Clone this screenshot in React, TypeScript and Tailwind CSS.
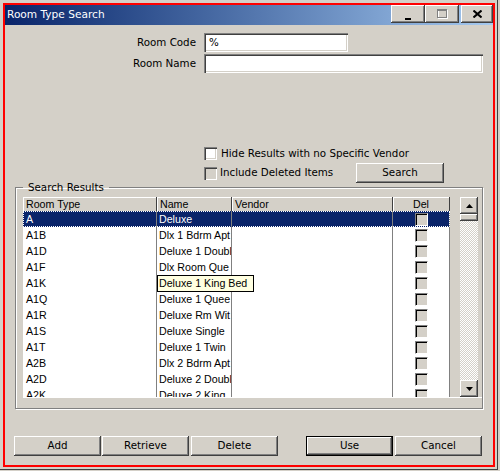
import React from "react";

const raised =
  "bg-[#d4d0c8] shadow-[inset_-1px_-1px_0_#404040,inset_1px_1px_0_#ffffff,inset_-2px_-2px_0_#808080]";
const sunken =
  "shadow-[inset_1px_1px_0_#808080,inset_2px_2px_0_#404040,inset_-1px_-1px_0_#ffffff,inset_-2px_-2px_0_#d4d0c8]";

const rows: [string, string][] = [
  ["A", "Deluxe"],
  ["A1B", "Dlx 1 Bdrm Apt"],
  ["A1D", "Deluxe 1 Doubl"],
  ["A1F", "Dlx Room Que"],
  ["A1K", "Deluxe 1 King Bed"],
  ["A1Q", "Deluxe 1 Quee"],
  ["A1R", "Deluxe Rm Wit"],
  ["A1S", "Deluxe Single"],
  ["A1T", "Deluxe 1 Twin"],
  ["A2B", "Dlx 2 Bdrm Apt"],
  ["A2D", "Deluxe 2 Doubl"],
  ["A2K", "Deluxe 2 King"],
];

function WinButton({ label, isDefault }: { label: string; isDefault?: boolean }) {
  if (isDefault) {
    return (
      <div className="w-[87px] h-[20px] border border-black">
        <div className={`${raised} w-full h-full flex items-center justify-center`}>{label}</div>
      </div>
    );
  }
  return <div className={`${raised} w-[87px] h-[20px] flex items-center justify-center`}>{label}</div>;
}

function DelBox() {
  return (
    <div className="w-[13px] h-[13px] bg-[#d4d0c8] border-t border-l border-[#808080] border-r border-b border-r-[#ffffff] border-b-[#ffffff] shadow-[inset_1px_1px_0_#000000]" />
  );
}

export default function App() {
  return (
    <div className="w-[500px] h-[471px] bg-[#d4d0c8] overflow-hidden font-['DejaVu_Sans',sans-serif] text-[10.3px] text-black">
      <div className="w-[498px] h-[470px] border-r border-b border-[#404040] pl-[3px] pt-[3px]">
        <div className="w-[492px] h-[464px] border-2 border-[#ff0000] flex flex-col">
          {/* Title bar */}
          <div className="h-[20px] flex items-start bg-gradient-to-r from-[#0a246a] to-[#a6caf0]">
            <div className="flex-1 pl-[2px] leading-[19px] text-white text-[10.6px]">Room Type Search</div>
            <div className={`${raised} w-[34px] h-[18px] flex items-center justify-center`}>
              <svg width="8" height="8" viewBox="0 0 8 8" className="mt-[4px]">
                <rect x="1" y="6" width="6" height="2" fill="#000" />
              </svg>
            </div>
            <div className={`${raised} w-[34px] h-[18px] flex items-center justify-center`}>
              <svg width="11" height="10" viewBox="0 0 11 10">
                <rect x="1.5" y="1.5" width="9" height="8" fill="none" stroke="#ffffff" />
                <rect x="0.5" y="0.5" width="9" height="8" fill="none" stroke="#808080" />
                <rect x="1" y="1" width="8" height="1" fill="#808080" />
              </svg>
            </div>
            <div className={`${raised} w-[32px] h-[18px] ml-[2px] flex items-center justify-center`}>
              <svg width="9" height="8" viewBox="0 0 9 8">
                <path d="M0.5 0.5 L8.5 7.5 M8.5 0.5 L0.5 7.5" stroke="#000" strokeWidth="2" />
              </svg>
            </div>
          </div>

          {/* Search fields */}
          <div className="mt-[8px] flex items-center">
            <div className="w-[191px] text-right">Room Code</div>
            <div className={`${sunken} ml-[8px] w-[144px] h-[19px] bg-white pl-[5px] leading-[19px]`}>%</div>
          </div>
          <div className="mt-[2px] flex items-center">
            <div className="w-[191px] text-right">Room Name</div>
            <div className={`${sunken} ml-[8px] w-[279px] h-[19px] bg-white`} />
          </div>

          {/* Options */}
          <div className="mt-[74px] pl-[199px] flex items-center h-[13px]">
            <div className={`${sunken} w-[13px] h-[13px] bg-white`} />
            <div className="ml-[4px]">Hide Results with no Specific Vendor</div>
          </div>
          <div className="mt-[5px] pl-[199px] flex items-center h-[16px]">
            <div className={`${sunken} w-[13px] h-[13px] bg-[#d4d0c8]`} />
            <div className="ml-[3px] w-[136px]">Include Deleted Items</div>
            <div className={`${raised} w-[88px] h-[20px] shrink-0 flex items-center justify-center`}>Search</div>
          </div>

          {/* Results group */}
          <fieldset className="ml-[10px] w-[468px] border border-[#808080] shadow-[1px_1px_0_#ffffff,inset_1px_1px_0_#ffffff] pl-[7px] pb-[10px]">
            <legend className="px-[5px] leading-[12px]">Search Results</legend>
            <div className="mt-[4px] flex border-b border-white">
              <div className="w-[427px] font-['Liberation_Sans',Arial,sans-serif] text-[10.67px]">
                <div className="flex h-[14px] leading-[14px] bg-[#d4d0c8]">
                  <div className="w-[134px] pl-[3px] border-r border-[#404040] shadow-[inset_1px_1px_0_#ffffff]">Room Type</div>
                  <div className="w-[75px] pl-[3px] border-r border-[#404040] shadow-[inset_1px_1px_0_#ffffff]">Name</div>
                  <div className="w-[161px] pl-[3px] border-r border-[#404040] shadow-[inset_1px_1px_0_#ffffff]">Vendor</div>
                  <div className="w-[57px] text-center border-r border-[#404040] shadow-[inset_1px_1px_0_#ffffff]">Del</div>
                </div>
                <div className="h-[186px] overflow-hidden bg-white">
                  {rows.map(([code, name], i) => {
                    const sel = i === 0;
                    const tip = name === "Deluxe 1 King Bed";
                    return (
                      <div
                        key={code}
                        className={`flex h-[16px] leading-[16px] ${
                          sel
                            ? "bg-[#0a246a] text-white outline outline-1 outline-dotted outline-white -outline-offset-1"
                            : ""
                        }`}
                      >
                        <div className="w-[134px] pl-[3px] border-r border-[#808080] overflow-hidden whitespace-nowrap">{code}</div>
                        <div className="w-[75px] border-r border-[#808080] relative">
                          <div className="pl-[2px] overflow-hidden whitespace-nowrap">{tip ? "" : name}</div>
                          {tip && (
                            <div className="absolute left-0 top-0 z-10 w-[97px] h-[17px] border border-black bg-[#ffffe1] text-black pl-[1px] leading-[15px] whitespace-nowrap">
                              {name}
                            </div>
                          )}
                        </div>
                        <div className="w-[161px] border-r border-[#808080]" />
                        <div className="w-[57px] border-r border-[#808080] flex items-center justify-center">
                          <DelBox />
                        </div>
                      </div>
                    );
                  })}
                </div>
              </div>
              <div className="w-[10px] bg-[#d4d0c8]" />
              <div className="w-[18px] h-[200px] flex flex-col">
                <div className={`${raised} h-[17px] flex items-center justify-center`}>
                  <svg width="7" height="4" viewBox="0 0 7 4">
                    <path d="M3.5 0 L7 4 L0 4 Z" fill="#000" />
                  </svg>
                </div>
                <div className={`${raised} h-[7px]`} />
                <div className="flex-1 bg-[image:repeating-conic-gradient(#ffffff_0%_25%,#d4d0c8_0%_50%)] bg-[length:2px_2px]" />
                <div className={`${raised} h-[17px] flex items-center justify-center`}>
                  <svg width="7" height="4" viewBox="0 0 7 4">
                    <path d="M0 0 L7 0 L3.5 4 Z" fill="#000" />
                  </svg>
                </div>
              </div>
            </div>
          </fieldset>

          {/* Buttons */}
          <div className="mt-[27px] ml-[9px] flex">
            <WinButton label="Add" />
            <div className="ml-[1px]">
              <WinButton label="Retrieve" />
            </div>
            <div className="ml-[2px]">
              <WinButton label="Delete" />
            </div>
            <div className="ml-[28px]">
              <WinButton label="Use" isDefault />
            </div>
            <div className="ml-[2px]">
              <WinButton label="Cancel" />
            </div>
          </div>
        </div>
      </div>
    </div>
  );
}
